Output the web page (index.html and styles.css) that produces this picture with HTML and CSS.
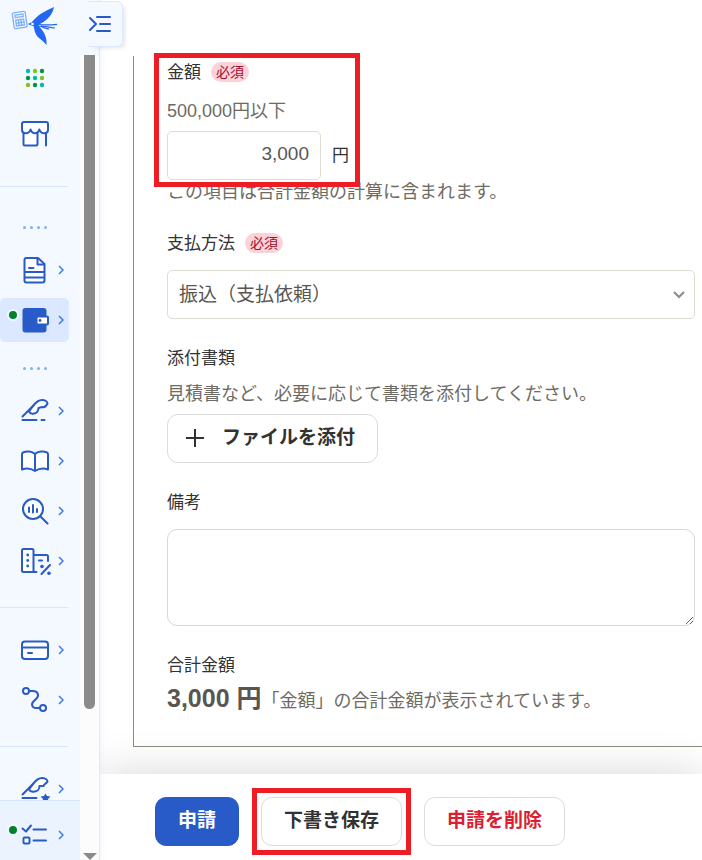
FILE: index.html
```html
<!DOCTYPE html>
<html lang="ja">
<head>
    <meta charset="UTF-8">
    <meta name="viewport" content="width=device-width, initial-scale=1.0">
    <title>支払依頼</title>
    <link rel="stylesheet" href="styles.css">
</head>
<body>

    <aside class="sidebar">
        <div class="sidebar-header">
            <a href="#" class="logo" aria-label="ホーム">
                <svg width="60" height="48" viewBox="0 0 60 48">
                    <g transform="translate(19.700 20) rotate(-8)" fill="none" stroke="#7fb0fa" stroke-width="1.300">
                        <rect x="-6.500" y="-8" width="13" height="16" rx="1.500"/>
                        <path d="M-4-5.500h8v2.500h-8zM-4-.5h8v6h-8zM-4 2.500h8M-1.300-.5v6M1.300-.5v6"/>
                    </g>
                    <g fill="#2468f2">
                        <path d="M31.500 22.500C34 19.500 37 16.500 41.700 13.300C45 11 50 9 54 7C53 11 52 13.500 50 16C47 19.500 44 22 40.700 23.500L36 27L31.500 25.500L27.500 24z"/>
                        <path d="M33.500 25C34.500 31 35.500 35 38.500 37.500C41 40 44.500 42 46.500 45C47 41 46 37 44.300 33.500C42.500 30 40 27 37.500 24.500z"/>
                    </g>
                    <path d="M38 24c6 1.500 12 1 19 .3M37 25.500c6 1 9 3.500 12 3.300M41 26c5-.2 8 2 14 2" fill="none" stroke="#2468f2" stroke-width="1.200"/>
                    <circle cx="32.500" cy="24" r="1.300" fill="#fff"/>
                </svg>
            </a>
            <button class="toggle" type="button" aria-label="メニューを開く">
                <svg width="24" height="20" viewBox="0 0 24 20" fill="none" stroke="#285ac8" stroke-width="2" stroke-linecap="round" stroke-linejoin="round">
                    <path d="M2 4l6 6-6 6M9 3h13M12 10h10M9 17h13"/>
                </svg>
            </button>
        </div>

        <div class="sidebar-body">
            <div class="sidebar-menu">
                <nav class="nav">
                    <a href="#" class="nav-item nav-item--apps" aria-label="アプリ一覧">
                        <svg class="icon" viewBox="0 0 28 28">
                            <g fill="#00b9b9"><circle cx="7" cy="7" r="2.200"/><circle cx="14" cy="14" r="2.200"/><circle cx="21" cy="21" r="2.200"/></g>
                            <g fill="#82c31e"><circle cx="14" cy="7" r="2.200"/><circle cx="21" cy="14" r="2.200"/><circle cx="7" cy="21" r="2.200"/></g>
                            <g fill="#00963c"><circle cx="21" cy="7" r="2.200"/><circle cx="7" cy="14" r="2.200"/><circle cx="14" cy="21" r="2.200"/></g>
                        </svg>
                    </a>
                    <a href="#" class="nav-item" aria-label="ストア">
                        <svg class="icon" viewBox="0 0 28 28">
                            <path class="plate" d="M2.500 12v12q0 1.500 1.500 1.500h11q1.500 0 1.500-1.500V12M25 13v12.500"/>
                            <path class="plate" d="M3 2h22q2 0 2 2V9.500c0 5-7 5-8.700 0-1.500 5-7.200 5-8.700 0C8 14.500 1 14.500 1 9.500V4q0-2 2-2z"/>
                        </svg>
                    </a>

                    <hr class="nav-divider nav-divider--top">
                    <div class="nav-dots"><i></i><i></i><i></i><i></i></div>

                    <a href="#" class="nav-item" aria-label="書類">
                        <svg class="icon" viewBox="0 0 28 28">
                            <path class="plate" d="M5.500 2H17l6.500 6v16.500q0 2-2 2H5.500q-2 0-2-2V4q0-2 2-2z"/>
                            <path d="M16.500 2.500V8.500H23M8 12h4.500M4 16h19M4 21.500h19"/>
                        </svg>
                        <svg class="chevron" viewBox="0 0 6 10"><path d="M1 1l4 4-4 4"/></svg>
                    </a>
                    <a href="#" class="nav-item nav-item--active" aria-label="支払">
                        <span class="status"></span>
                        <svg class="icon" viewBox="0 0 28 28">
                            <rect x="1.500" y="2" width="24" height="24.500" rx="3" fill="#285ac8" stroke="none"/>
                            <rect class="plate" x="15.500" y="10.500" width="11.500" height="8" rx="1"/>
                            <circle cx="19" cy="14.500" r="1.400" fill="#285ac8" stroke="none"/>
                        </svg>
                        <svg class="chevron" viewBox="0 0 6 10"><path d="M1 1l4 4-4 4"/></svg>
                    </a>

                    <div class="nav-dots"><i></i><i></i><i></i><i></i></div>

                    <a href="#" class="nav-item" aria-label="申請">
                        <svg class="icon" viewBox="0 0 28 28">
                            <path class="plate" d="M8 14.500L12 9c3-4 6-6 9-6s5.500 1.500 5.500 3.500c-1.500 3-3.500 4-5 3.500-1.500 0-2.500.5-4 1 0 3-2 5.500-4.500 5.500-2 .5-4 0-5-2z"/>
                            <path d="M1.500 19.500L12.500 8.500M1.500 23h14M20.500 23h3"/>
                        </svg>
                        <svg class="chevron" viewBox="0 0 6 10"><path d="M1 1l4 4-4 4"/></svg>
                    </a>
                    <a href="#" class="nav-item" aria-label="帳簿">
                        <svg class="icon" viewBox="0 0 28 28">
                            <path class="plate" d="M14 7C11 4 5.500 4 2.500 5.200q-1.500.5-1.500 2V22.500c4-1.500 9-1 13 1.500 4-2.500 9-3 13-1.500V7.200q0-1.500-1.500-2C22.500 4 17 4 14 7v17"/>
                        </svg>
                        <svg class="chevron" viewBox="0 0 6 10"><path d="M1 1l4 4-4 4"/></svg>
                    </a>
                    <a href="#" class="nav-item" aria-label="分析">
                        <svg class="icon" viewBox="0 0 28 28">
                            <circle class="plate" cx="12" cy="12" r="10"/>
                            <path d="M19.500 19.500l7 7M8 10.500v4.500M12 8v7.500M16 12v3"/>
                        </svg>
                        <svg class="chevron" viewBox="0 0 6 10"><path d="M1 1l4 4-4 4"/></svg>
                    </a>
                    <a href="#" class="nav-item" aria-label="税務">
                        <svg class="icon icon--wide" viewBox="0 0 31 28">
                            <path class="plate" d="M2.500 2h8.500q1.500 0 1.500 1.500V25H2.500Q1 25 1 23.500v-20Q1 2 2.500 2z"/>
                            <path d="M13 8h12.500q1.500 0 1.500 1.500V14M13 25h2.500M18 13.500h3M20.500 27l8.500-9"/>
                            <g fill="#285ac8" stroke="none"><circle cx="6.700" cy="8" r="1.400"/><circle cx="6.700" cy="13.500" r="1.400"/><circle cx="6.700" cy="19" r="1.400"/><circle cx="21" cy="19.500" r="1.800"/><circle cx="28" cy="26.200" r="1.800"/></g>
                        </svg>
                        <svg class="chevron" viewBox="0 0 6 10"><path d="M1 1l4 4-4 4"/></svg>
                    </a>

                    <hr class="nav-divider">

                    <a href="#" class="nav-item" aria-label="カード">
                        <svg class="icon" viewBox="0 0 28 28">
                            <rect class="plate" x="1" y="5.500" width="26" height="17.500" rx="3"/>
                            <path d="M1 11.500h26M7 17h4"/>
                        </svg>
                        <svg class="chevron" viewBox="0 0 6 10"><path d="M1 1l4 4-4 4"/></svg>
                    </a>
                    <a href="#" class="nav-item" aria-label="経路">
                        <svg class="icon" viewBox="0 0 28 28">
                            <path d="M8 5h4c5 0 6.500 4.500 3.500 7.500l-3 3C9.500 18.500 11.500 22 15 22h4"/>
                            <circle class="plate" cx="5" cy="5" r="3"/><circle class="plate" cx="22" cy="22" r="3"/>
                        </svg>
                        <svg class="chevron" viewBox="0 0 6 10"><path d="M1 1l4 4-4 4"/></svg>
                    </a>

                    <hr class="nav-divider">

                    <a href="#" class="nav-item" aria-label="電子契約">
                        <svg class="icon icon--wide" viewBox="0 0 31 28">
                            <path class="plate" d="M8 14.500L12 9c3-4 6-6 9-6s5.500 1.500 5.500 3.500c-1.500 3-3.500 2-4 4.500-1 .5-2.500-.5-4 0 0 3-2 5.500-5 5.500-2.500.5-4.500 0-5.500-2z"/>
                            <path d="M1.500 19.500L12.500 8.500M1.500 23h14"/>
                            <path fill="#285ac8" stroke="none" d="M24.500 18.500l1.500 2.500 3.500.5-2.500 2.500.5 3.500-3-1.500-3 1.500.5-3.500-2.500-2.500 3.500-.5z"/>
                        </svg>
                        <svg class="chevron" viewBox="0 0 6 10"><path d="M1 1l4 4-4 4"/></svg>
                    </a>
                </nav>

                <div class="sidebar-bottom">
                    <a href="#" class="nav-item" aria-label="タスク">
                        <span class="status"></span>
                        <svg class="icon" viewBox="0 0 28 28">
                            <path d="M1.500 7.500l3.500 3 5-6M12.500 8.500h12.500M12.500 19.500h12.500"/>
                            <rect class="plate" x="2.500" y="16.500" width="6" height="6" rx="1"/>
                        </svg>
                        <svg class="chevron" viewBox="0 0 6 10"><path d="M1 1l4 4-4 4"/></svg>
                    </a>
                </div>
            </div>

            <div class="scrollbar">
                <div class="scrollbar-thumb"></div>
                <div class="scrollbar-arrow"></div>
            </div>
        </div>
    </aside>

    <main class="main">
        <div class="content">
            <form class="form" id="requestForm">
                <div class="field field--marked">
                    <div class="field-head">
                        <label for="amount">金額</label>
                        <span class="badge">必須</span>
                    </div>
                    <p class="hint hint--before">500,000円以下</p>
                    <div class="amount">
                        <input class="control amount-input" type="text" id="amount" value="3,000">
                        <span>円</span>
                    </div>
                    <p class="hint">この項目は合計金額の計算に含まれます。</p>
                    <div class="marker marker--field"></div>
                </div>

                <div class="field">
                    <div class="field-head">
                        <label for="method">支払方法</label>
                        <span class="badge">必須</span>
                    </div>
                    <div class="select-wrap">
                        <select class="control" id="method">
                            <option>振込（支払依頼）</option>
                        </select>
                        <svg class="select-arrow" width="12" height="8" viewBox="0 0 12 8" fill="none" stroke="#8c8989" stroke-width="2"><path d="M1 1l5 5 5-5"/></svg>
                    </div>
                </div>

                <div class="field">
                    <div class="field-head field-head--tight">
                        <span id="filesLabel">添付書類</span>
                    </div>
                    <p class="hint hint--before">見積書など、必要に応じて書類を添付してください。</p>
                    <button class="btn btn--file" type="button" aria-describedby="filesLabel">
                        <svg width="18" height="18" viewBox="0 0 18 18" stroke="#323232" stroke-width="2"><path d="M9 0v18M0 9h18"/></svg>
                        ファイルを添付
                    </button>
                </div>

                <div class="field">
                    <div class="field-head">
                        <label for="note">備考</label>
                    </div>
                    <textarea class="note" id="note"></textarea>
                </div>

                <div class="field">
                    <div class="field-head field-head--total">合計金額</div>
                    <p class="total"><strong>3,000 円</strong><span class="hint">「金額」の合計金額が表示されています。</span></p>
                </div>
            </form>
        </div>

        <footer class="actions">
            <button class="btn btn--primary" type="submit" form="requestForm">申請</button>
            <div class="marked">
                <button class="btn" type="button">下書き保存</button>
                <div class="marker marker--button"></div>
            </div>
            <button class="btn btn--danger" type="button">申請を削除</button>
        </footer>
    </main>

</body>
</html>
```

FILE: styles.css
```css
* {
    box-sizing: border-box;
}

body {
    margin: 0;
    height: 100vh;
    display: flex;
    overflow: hidden;
    background-color: #fff;
    color: #323232;
    font-family: "Liberation Sans", "Noto Sans CJK JP", sans-serif;
    font-size: 17px;
    line-height: 24px;
}

p {
    margin: 0;
}

button,
input,
select,
textarea {
    font: inherit;
    color: inherit;
}

/* sidebar */
.sidebar {
    flex: 0 0 100px;
    min-width: 0;
    display: flex;
    flex-direction: column;
    position: relative;
    z-index: 2;
    background-color: #f4f8ff;
    border-right: 1px solid #dce8ff;
    box-shadow: 0 0 8px rgba(40, 90, 200, 0.08);
}

.sidebar-header {
    flex: 0 0 54px;
    display: flex;
}

.logo {
    flex: 0 0 88px;
}

.toggle {
    flex: 0 0 35px;
    height: 46px;
    margin-top: 1px;
    padding: 0;
    display: flex;
    align-items: center;
    background-color: #f4f8ff;
    border: 1px solid #dce8ff;
    border-left: none;
    border-radius: 0 6px 6px 0;
    box-shadow: 4px 3px 4px -2px rgba(0, 0, 0, 0.1);
    cursor: pointer;
}

.sidebar-body {
    flex: 1;
    min-height: 0;
    display: flex;
}

.sidebar-menu {
    flex: 0 0 80px;
    display: flex;
    flex-direction: column;
}

.nav {
    flex: 1;
    min-height: 0;
    display: flex;
    flex-direction: column;
    overflow: hidden;
    padding-top: 1px;
}

.nav-item {
    flex: 0 0 44px;
    width: 69px;
    display: flex;
    align-items: center;
    position: relative;
    padding-left: 21px;
    border-radius: 5px;
}

.nav-item + .nav-item {
    margin-top: 6px;
}

.nav-item--apps + .nav-item {
    margin-top: 12px;
}

.nav-item--active {
    background-color: #dce8ff;
}

.icon {
    width: 28px;
    height: 28px;
    fill: none;
    stroke: #285ac8;
    stroke-width: 2;
    stroke-linecap: round;
    stroke-linejoin: round;
}

.icon--wide {
    width: 31px;
    margin-right: -3px;
}

.nav-item--apps .icon {
    stroke: none;
}

.plate {
    fill: #fff;
}

.chevron {
    width: 6px;
    height: 10px;
    margin-left: 9px;
    fill: none;
    stroke: #3c78f0;
    stroke-width: 1.5;
}

.status {
    position: absolute;
    left: 7px;
    top: 11px;
    width: 12px;
    height: 12px;
    border: 2px solid #f4f8ff;
    border-radius: 50%;
    background-color: #00822d;
}

.nav-divider {
    flex: 0 0 1px;
    width: 68px;
    margin: 24px 0 20px;
    border: none;
    background-color: #d7e6fd;
}

.nav-divider--top {
    margin: 30px 0 14px;
}

.nav-dots {
    display: flex;
    gap: 4px;
    margin: 25px 0 19px 23px;
}

.nav-dots i {
    width: 3px;
    height: 3px;
    border-radius: 50%;
    background-color: #82aff8;
}

.sidebar-bottom {
    flex: 0 0 60px;
    display: flex;
    align-items: center;
    padding-top: 8px;
    background-color: #ebf3ff;
    border-top: 1px solid #d7e6fd;
}

.sidebar-bottom .nav-item {
    height: 44px;
}

.scrollbar {
    flex: 1;
    display: flex;
    flex-direction: column;
    justify-content: space-between;
    align-items: center;
    background-color: #fcfcfc;
}

.scrollbar-thumb {
    width: 11px;
    height: 81.3%;
    border-radius: 0 0 6px 6px;
    background-color: #8b8b8b;
}

.scrollbar-arrow {
    border: 7px solid transparent;
    border-top-color: #8b8b8b;
    border-bottom: none;
}

/* form */
.main {
    flex: 1;
    min-width: 0;
    display: flex;
    flex-direction: column;
}

.content {
    flex: 1;
    min-height: 0;
    overflow: hidden;
    padding: 56px 0 0 33px;
}

.form {
    display: flex;
    flex-direction: column;
    gap: 28px;
    padding: 5px 7px 26px 33px;
    border-left: 1px solid #8c8989;
    border-bottom: 1px solid #8c8c7d;
}

.field--marked,
.marked {
    position: relative;
}

.field-head {
    display: flex;
    align-items: flex-start;
    gap: 10px;
    margin-bottom: 14px;
}

.field-head--tight {
    margin-bottom: 11px;
}

.field-head--total {
    margin-bottom: 2px;
}

.badge {
    margin-top: 1px;
    padding: 0 5px;
    border-radius: 10px;
    background-color: #fad2d7;
    color: #a30f2d;
    font-size: 14px;
    line-height: 20px;
}

.hint {
    color: #6e6b64;
    font-size: 18px;
}

.hint--before {
    margin-bottom: 8px;
}

.control {
    display: block;
    width: 100%;
    height: 49px;
    padding: 0 11px;
    border: 1px solid #e1dcd2;
    border-radius: 5px;
    background-color: #fff;
    color: #595652;
    font-size: 19px;
    appearance: none;
}

.amount {
    display: flex;
    align-items: center;
    gap: 11px;
}

.amount-input {
    width: 154px;
    padding-bottom: 4px;
    text-align: right;
}

.select-wrap {
    position: relative;
}

.select-arrow {
    position: absolute;
    right: 10px;
    top: 21px;
    pointer-events: none;
}

.note {
    display: block;
    width: 100%;
    height: 97px;
    padding: 10px;
    border: 1px solid #d7d7d7;
    border-radius: 10px;
    background-color: #fff;
    resize: vertical;
}

.total {
    line-height: 36px;
}

.total strong {
    color: #595652;
    font-size: 25px;
}

/* buttons */
.actions {
    flex: 0 0 86px;
    display: flex;
    align-items: flex-start;
    gap: 22px;
    position: relative;
    padding: 23px 55px 0;
    background-color: #fff;
    box-shadow: 0 0 46px rgba(0, 0, 0, 0.16);
}

.btn {
    display: flex;
    align-items: center;
    height: 49px;
    padding: 0 22px 1px;
    border: 1px solid #dcdcdc;
    border-radius: 11px;
    background-color: #fff;
    font-size: 19px;
    font-weight: bold;
    white-space: nowrap;
    cursor: pointer;
}

.btn--primary {
    background-color: #285ac8;
    border-color: #285ac8;
    color: #fff;
}

.btn--danger {
    color: #dc1e32;
}

.btn--file {
    gap: 18px;
    padding-left: 18px;
}

/* red frames around the parts being explained */
.marker {
    position: absolute;
    border: 5px solid #ee1c25;
    pointer-events: none;
}

.marker--field {
    left: -13px;
    top: -8px;
    width: 206px;
    height: 134px;
}

.marker--button {
    inset: -9px;
}
```
